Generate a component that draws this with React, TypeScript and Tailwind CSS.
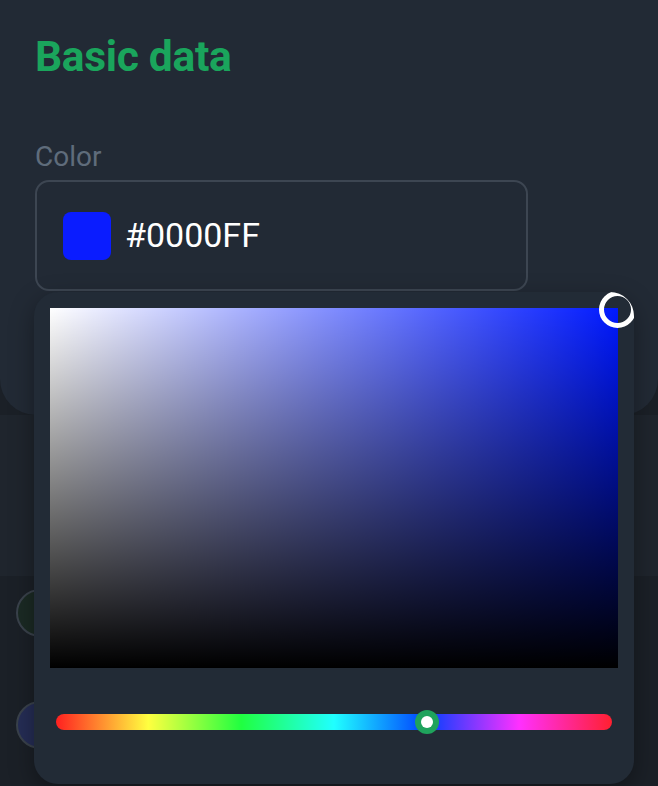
import React from "react";

export default function App() {
  return (
    <div
      className="relative w-[658px] h-[786px] overflow-hidden bg-[#1b2027] flex flex-col"
      style={{ fontFamily: "Roboto, 'Noto Sans', sans-serif" }}
    >
      {/* top card */}
      <div className="h-[415px] shrink-0 bg-[#222a35] rounded-bl-[36px] rounded-br-[36px] px-[35px] pt-[28px] flex flex-col">
        <h1 className="text-[42.5px] leading-[58px] font-bold text-[#1aa55c] tracking-[-0.3px]">Basic data</h1>
        <div className="mt-[54px] text-[28px] leading-[34px] text-[#5f6c7b]">Color</div>
        <div className="mt-[6px] w-[493px] h-[111px] border-2 border-[#3d4652] rounded-[14px] flex items-center pl-[26px] gap-[14px]">
          <div className="w-[48px] h-[48px] rounded-[8px] bg-[#0a1cff]" />
          <span className="text-[34px] text-white">#0000FF</span>
        </div>
      </div>
      {/* middle band */}
      <div className="h-[161px] shrink-0 bg-[#1f252d]" />
      {/* list rows with avatars */}
      <div className="flex flex-col gap-[64px] pl-[16px] pt-[13px]">
        <div className="w-[48px] h-[48px] rounded-full bg-[#1b2a24] border-2 border-[#3a424c]" />
        <div className="w-[48px] h-[48px] rounded-full bg-[#252d55] border-2 border-[#3a424c]" />
      </div>

      {/* popover */}
      <div className="absolute left-[34px] top-[292px] w-[600px] h-[492px] bg-[#222b36] rounded-[24px] shadow-[0_8px_24px_rgba(0,0,0,0.35)] overflow-hidden flex flex-col pt-[16px] px-[16px]">
        <div className="relative w-[568px] h-[360px]">
          <div className="absolute inset-0 bg-[#0019ff]" />
          <div className="absolute inset-0 bg-gradient-to-r from-white to-transparent" />
          <div className="absolute inset-0 bg-gradient-to-t from-black to-transparent" />
          <div className="absolute -right-[18px] -top-[17px] w-[37px] h-[37px] rounded-full border-[5px] border-white" />
        </div>
        <div className="relative mt-[46px] mx-[6px] h-[16px] rounded-full bg-[linear-gradient(to_right,#ff2020_0%,#ffff40_16.6%,#20ff40_33.3%,#20ffff_50%,#0040ff_66.6%,#ff30ff_83.3%,#ff2030_100%)]">
          <div className="absolute left-[359px] -top-[4px] w-[24px] h-[24px] rounded-full bg-[#1fa35c] flex items-center justify-center">
            <div className="w-[12px] h-[12px] rounded-full bg-white" />
          </div>
        </div>
      </div>
    </div>
  );
}
